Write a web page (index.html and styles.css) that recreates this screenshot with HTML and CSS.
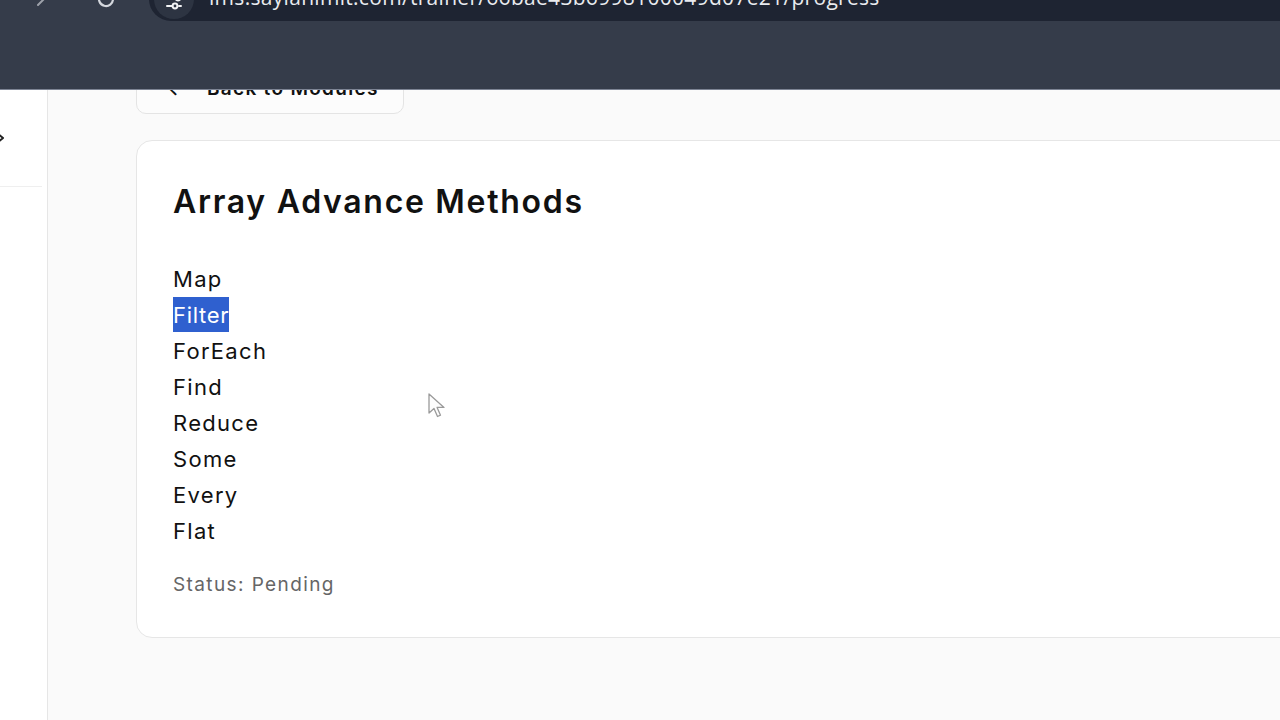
FILE: index.html
```html
<!DOCTYPE html>
<html lang="en">
  <head>
    <meta charset="UTF-8" />
    <meta name="viewport" content="width=device-width, initial-scale=1.0" />
    <title>Progress - Array Advance Methods</title>
    <link rel="stylesheet" href="styles.css">
  </head>
  <body>
    <!-- Browser toolbar (sits over the page) -->
    <header class="browser-bar">
      <div class="omnibar-row">
        <svg class="nav-icon back" width="20" height="20" viewBox="0 0 20 20">
          <path d="M16 10H4M9 4l-6 6 6 6" fill="none" stroke="#c9ccd3" stroke-width="2" stroke-linecap="round" stroke-linejoin="round" />
        </svg>
        <svg class="nav-icon reload" width="22" height="22" viewBox="0 0 22 22">
          <path d="M18 11a7 7 0 1 1-2.1-5" fill="none" stroke="#d4d7dd" stroke-width="2.2" stroke-linecap="round" />
          <path d="M17 2v5h-5" fill="none" stroke="#d4d7dd" stroke-width="2.2" stroke-linecap="round" stroke-linejoin="round" />
        </svg>
        <div class="omnibox">
          <span class="site-info">
            <svg width="18" height="18" viewBox="0 0 18 18">
              <path d="M2 5h9M2 13h5M14 13h2" stroke="#f2f3f5" stroke-width="2" stroke-linecap="round" />
              <circle cx="13" cy="5" r="2.4" fill="none" stroke="#f2f3f5" stroke-width="2" />
              <circle cx="10" cy="13" r="2.4" fill="none" stroke="#f2f3f5" stroke-width="2" />
            </svg>
          </span>
          <span class="url">lms.saylanimit.com/trainer/66bae43b6998100049d07e21/progress</span>
        </div>
      </div>
    </header>

    <div class="layout">
      <aside class="sidebar">
        <svg class="side-chevron" width="14" height="16" viewBox="0 0 14 16">
          <path d="M3 3l6 5-6 5" fill="none" stroke="#222" stroke-width="2" stroke-linecap="round" stroke-linejoin="round" />
        </svg>
        <div class="side-divider"></div>
      </aside>

      <main class="main">
        <button class="back-btn">
          <span class="back-arrow">&larr;</span>
          <span>Back to Modules</span>
        </button>

        <section class="card">
          <h1 class="card-title">Array Advance Methods</h1>
          <ul class="topic-list">
            <li>Map</li>
            <li><span class="selected">Filter</span></li>
            <li>ForEach</li>
            <li>Find</li>
            <li>Reduce</li>
            <li>Some</li>
            <li>Every</li>
            <li>Flat</li>
          </ul>
          <p class="status">Status: Pending</p>
        </section>
      </main>
    </div>

    <!-- mouse pointer -->
    <svg class="pointer" width="20" height="28" viewBox="0 0 20 28">
      <path d="M2 2v19l5-4.5 3.5 8 3-1.3-3.4-7.8H17z" fill="#fdfdfd" stroke="#9a9a9a" stroke-width="1.3" stroke-linejoin="round" />
    </svg>
  </body>
</html>
```

FILE: styles.css
```css
/* General Body and Layout Styles */
body {
  margin: 0;
  height: 100vh;
  overflow: hidden;
  background-color: #fafafa;
  font-family: "Inter", "Open Sans", sans-serif;
  color: #111;
}

/* Browser chrome */
.browser-bar {
  position: fixed; /* lies over the top of the page */
  top: 0;
  left: 0;
  right: 0;
  height: 89px;
  background-color: #353c4a;
  border-bottom: 1px solid #7d8494;
  z-index: 10;
  overflow: hidden;
}

.omnibar-row {
  display: flex;
  align-items: center;
  height: 44px;
  margin-top: -23px;
}

.nav-icon {
  flex-shrink: 0;
}

.nav-icon.back {
  margin-left: 27px;
  transform: rotate(180deg);
  opacity: 0.7;
}

.nav-icon.reload {
  margin-left: 48px;
}

.omnibox {
  display: flex;
  align-items: center;
  flex: 1;
  height: 44px;
  margin-left: 32px;
  padding-left: 5px;
  background-color: #1e2432;
  border-radius: 22px 0 0 22px;
}

.site-info {
  display: flex;
  align-items: center;
  justify-content: center;
  width: 40px;
  height: 40px;
  border-radius: 50%;
  background-color: #2d3442;
}

.site-info svg {
  margin-top: 6px;
}

.url {
  margin-left: 15px;
  margin-top: -4px;
  font-family: "Open Sans", sans-serif;
  font-size: 21px;
  letter-spacing: 0.3px;
  color: #e9ebef;
  white-space: nowrap;
}

.layout {
  display: flex;
  height: 100%;
}

/* Sidebar */
.sidebar {
  width: 48px;
  flex-shrink: 0;
  background-color: #fff;
  border-right: 1px solid #e6e6e6;
  padding-top: 130px;
  box-sizing: border-box;
}

.side-chevron {
  display: block;
  margin-left: -6px;
}

.side-divider {
  height: 1px;
  width: 42px;
  margin-top: 40px;
  background-color: #efefef;
}

/* Main column */
.main {
  flex: 1;
  padding: 63px 0 0 88px;
  min-width: 0;
}

.back-btn {
  display: flex;
  align-items: center;
  width: 268px;
  height: 51px;
  padding: 0 0 0 30px;
  background-color: #fcfcfc;
  border: 1px solid #e4e4e4;
  border-radius: 10px;
  font-family: inherit;
  font-size: 19px;
  font-weight: 600;
  letter-spacing: 1.3px;
  color: #111;
}

.back-arrow {
  width: 40px;
  text-align: left;
}

.card {
  width: 1240px;
  height: 498px;
  margin-top: 26px;
  padding: 41px 36px 0;
  box-sizing: border-box;
  background-color: #fff;
  border: 1.5px solid #e6e6e6;
  border-radius: 16px;
}

.card-title {
  margin: 0 0 39px;
  font-size: 32px;
  line-height: 40px;
  font-weight: 600;
  letter-spacing: 1.7px;
}

.topic-list {
  list-style: none;
  margin: 0;
  padding: 0;
}

.topic-list li {
  font-size: 22px;
  line-height: 36px;
  height: 36px;
  letter-spacing: 1.3px;
}

.selected {
  display: inline-block;
  height: 35px;
  vertical-align: top;
  letter-spacing: 0.7px;
  background-color: #2f60cf;
  color: #fff;
}

.status {
  margin: 22px 0 0;
  font-size: 19px;
  line-height: 28px;
  letter-spacing: 1.4px;
  color: #666;
}

.pointer {
  position: absolute;
  left: 427px;
  top: 392px;
}
```
